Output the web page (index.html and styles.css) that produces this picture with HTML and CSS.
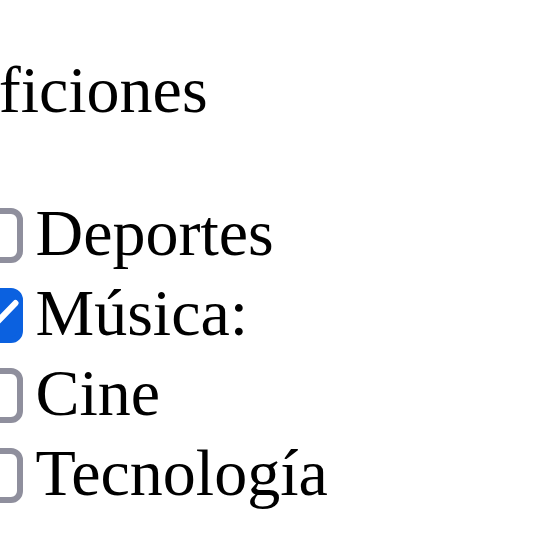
FILE: index.html
```html
<!DOCTYPE html>
<html lang="es">
<head>
<meta charset="utf-8">
<title>Aficiones</title>
<link rel="stylesheet" href="styles.css">
</head>
<body>
<form class="page">
  <p class="title">Aficiones</p>
  <div class="options">
    <label class="opt"><input class="cb" type="checkbox"><span class="txt">Deportes</span></label>
    <label class="opt"><input class="cb" type="checkbox" checked><span class="txt">Música:</span></label>
    <label class="opt"><input class="cb" type="checkbox"><span class="txt">Cine</span></label>
    <label class="opt"><input class="cb" type="checkbox"><span class="txt">Tecnología</span></label>
  </div>
</form>
</body>
</html>
```

FILE: styles.css
```css
html, body {
  margin: 0;
  padding: 0;
  background: #ffffff;
  overflow: hidden;
}
.page {
  margin: 49.5px 0 0 -49px;
  font-family: "Liberation Serif", "Times New Roman", serif;
  font-size: 66px;
  line-height: 80px;
  color: #000000;
}
.title {
  margin: 0 0 63px 0;
  height: 80px;
}
.options {
  display: flex;
  flex-direction: column;
}
.opt {
  display: flex;
  align-items: flex-start;
  height: 80px;
}
.cb {
  appearance: none;
  -webkit-appearance: none;
  position: relative;
  box-sizing: border-box;
  width: 55px;
  height: 55px;
  margin: 15.5px 12.5px 0 17px;
  border: 6px solid #8f8f9d;
  border-radius: 12px;
  background: #ffffff;
  flex: none;
}
.cb:checked {
  background: #0b61e0;
  border-color: #0b61e0;
}
.cb:checked::before {
  content: "";
  position: absolute;
  left: 7.5px;
  top: 19px;
  width: 42px;
  height: 6px;
  border-radius: 3px;
  background: #ffffff;
  transform: rotate(-46deg);
}
.cb:checked::after {
  content: "";
  position: absolute;
  left: 0px;
  top: 26px;
  width: 23px;
  height: 6px;
  border-radius: 3px;
  background: #ffffff;
  transform: rotate(45deg);
}
.txt {
  display: block;
}
```
